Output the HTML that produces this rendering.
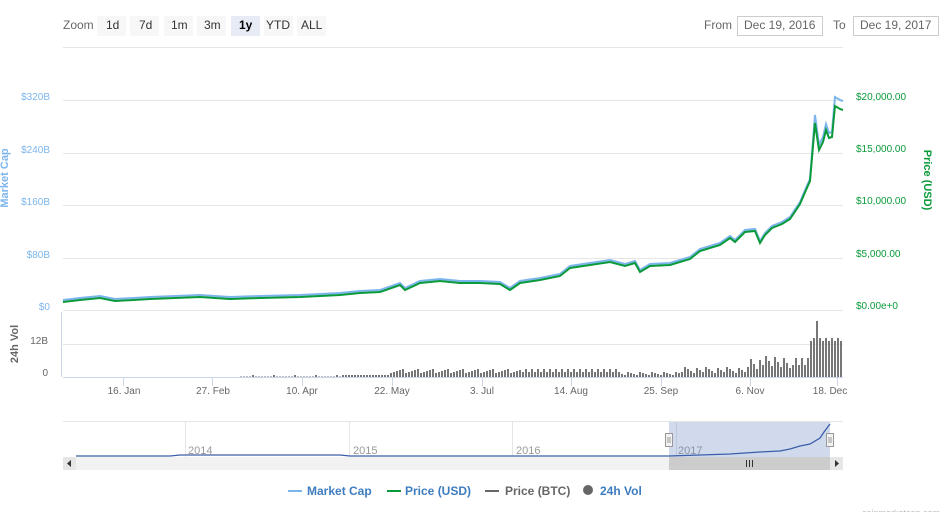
<!DOCTYPE html>
<html><head><meta charset="utf-8"><style>
body{margin:0;background:#fff;width:944px;height:512px;overflow:hidden;font-family:"Liberation Sans","DejaVu Sans",sans-serif}
svg text{font-family:"Liberation Sans","DejaVu Sans",sans-serif}
</style></head><body>
<svg id="s" width="944" height="512" viewBox="0 0 944 512" xmlns="http://www.w3.org/2000/svg">
<g font-size="12" fill="#666">
<text x="63" y="29">Zoom</text>
<rect x="97" y="16" width="29" height="20" fill="#f7f7f7"/><text x="106" y="29" fill="#333">1d</text>
<rect x="130" y="16" width="29" height="20" fill="#f7f7f7"/><text x="139" y="29" fill="#333">7d</text>
<rect x="164" y="16" width="29" height="20" fill="#f7f7f7"/><text x="171" y="29" fill="#333">1m</text>
<rect x="197" y="16" width="29" height="20" fill="#f7f7f7"/><text x="204" y="29" fill="#333">3m</text>
<rect x="231" y="16" width="29" height="20" fill="#e6ebf5"/><text x="239" y="29" fill="#000" font-weight="bold">1y</text>
<rect x="264" y="16" width="29" height="20" fill="#f7f7f7"/><text x="266" y="29" fill="#333">YTD</text>
<rect x="297" y="16" width="29" height="20" fill="#f7f7f7"/><text x="301" y="29" fill="#333">ALL</text>
<text x="704" y="29">From</text>
<rect x="737.5" y="16.5" width="85" height="19" fill="#fff" stroke="#ccc"/><text x="744" y="29">Dec 19, 2016</text>
<text x="833" y="29">To</text>
<rect x="853.5" y="16.5" width="85" height="19" fill="#fff" stroke="#ccc"/><text x="860" y="29">Dec 19, 2017</text>
</g>
<g stroke="#e6e6e6" stroke-width="1">
<line x1="63" x2="843" y1="47.5" y2="47.5"/>
<line x1="63" x2="843" y1="100.5" y2="100.5"/>
<line x1="63" x2="843" y1="153.5" y2="153.5"/>
<line x1="63" x2="843" y1="205.5" y2="205.5"/>
<line x1="63" x2="843" y1="258.5" y2="258.5"/>
<line x1="63" x2="843" y1="310.5" y2="310.5"/>
<line x1="63" x2="843" y1="344.5" y2="344.5"/>
<line x1="63" x2="843" y1="421.5" y2="421.5"/>
</g>
<line x1="61.5" x2="61.5" y1="312" y2="377" stroke="#ccd6eb"/>
<line x1="63" x2="843" y1="377.5" y2="377.5" stroke="#ccd6eb"/>
<g font-size="10" fill="#7cb5ec" text-anchor="end">
<text x="50" y="100">$320B</text><text x="50" y="153">$240B</text><text x="50" y="205">$160B</text><text x="50" y="258">$80B</text><text x="50" y="310">$0</text>
</g>
<text transform="translate(8,178) rotate(-90)" font-size="11" font-weight="bold" fill="#7cb5ec" text-anchor="middle">Market Cap</text>
<g font-size="10" fill="#0a9a3a">
<text x="856" y="100">$20,000.00</text><text x="856" y="152">$15,000.00</text><text x="856" y="204">$10,000.00</text><text x="856" y="257">$5,000.00</text><text x="856" y="309">$0.00e+0</text>
</g>
<text transform="translate(924,180) rotate(90)" font-size="11" font-weight="bold" fill="#0a9a3a" text-anchor="middle">Price (USD)</text>
<g font-size="10" fill="#666" text-anchor="end"><text x="48" y="344">12B</text><text x="48" y="376">0</text></g>
<text transform="translate(18,344) rotate(-90)" font-size="11" font-weight="bold" fill="#666" text-anchor="middle">24h Vol</text>
<g id="vol" fill="#777"></g>
<g stroke="#ccd6eb"><line x1="123.5" x2="123.5" y1="378" y2="386"/><line x1="212.5" x2="212.5" y1="378" y2="386"/><line x1="302.5" x2="302.5" y1="378" y2="386"/><line x1="392.5" x2="392.5" y1="378" y2="386"/><line x1="482.5" x2="482.5" y1="378" y2="386"/><line x1="571.5" x2="571.5" y1="378" y2="386"/><line x1="661.5" x2="661.5" y1="378" y2="386"/><line x1="750.5" x2="750.5" y1="378" y2="386"/><line x1="837.5" x2="837.5" y1="378" y2="386"/></g>
<g font-size="10" fill="#666" text-anchor="middle">
<text x="124" y="394">16. Jan</text><text x="213" y="394">27. Feb</text><text x="302" y="394">10. Apr</text><text x="392" y="394">22. May</text><text x="482" y="394">3. Jul</text><text x="571" y="394">14. Aug</text><text x="661" y="394">25. Sep</text><text x="750" y="394">6. Nov</text><text x="830" y="394">18. Dec</text>
</g>
<polyline fill="none" stroke="#7cb5ec" stroke-width="2" points="63,300 80,298 100,296 115,299 150,297 200,295 230,297 260,296 300,295 340,293 360,291 380,290 400,283 405,288 420,281 440,279 460,281 480,281 500,282 510,288 520,281 540,278 560,274 570,266 590,263 610,260 625,264 635,261 640,270 650,264 670,263 690,257 700,249 720,243 730,236 735,240 745,230 755,229 760,241 765,233 772,226 782,222 790,217 800,202 806,188 810,179 815,115 819,145 823,137 826,124 829,133 832,132 835,97 840,100 843,101"/>
<polyline fill="none" stroke="#0a9a3a" stroke-width="2" points="63,302 80,300 100,298 115,301 150,299 200,297 230,299 260,298 300,297 340,295 360,293 380,292 400,285 405,290 420,283 440,281 460,283 480,283 500,284 510,290 520,283 540,280 560,276 570,268 590,265 610,262 625,266 635,263 640,272 650,266 670,265 690,259 700,251 720,245 730,238 735,242 745,232 755,231 760,243 765,235 772,228 782,224 790,219 800,204 806,190 810,181 815,123 819,150 823,142 826,130 829,138 832,137 835,106 840,109 843,110"/>
<!-- navigator -->
<g stroke="#e6e6e6"><line x1="185.5" x2="185.5" y1="422" y2="457"/><line x1="349.5" x2="349.5" y1="422" y2="457"/><line x1="512.5" x2="512.5" y1="422" y2="457"/><line x1="676.5" x2="676.5" y1="422" y2="457"/></g>
<g font-size="11" fill="#999"><text x="188" y="454">2014</text><text x="353" y="454">2015</text><text x="516" y="454">2016</text><text x="678" y="454">2017</text></g>
<rect x="669" y="422" width="161" height="35" fill="rgba(102,133,194,0.3)"/>
<polyline fill="none" stroke="#3a5fa8" stroke-width="1.3" points="76,456 170,456 180,455 340,455 350,456 669,456 700,455 730,454 760,452 780,451 790,449 800,446 810,444 820,438 824,432 827,428 830,424"/>
<rect x="665.5" y="433.5" width="7" height="13" fill="#f2f2f2" stroke="#999"/><line x1="668" x2="668" y1="437" y2="443" stroke="#999"/><line x1="670" x2="670" y1="437" y2="443" stroke="#999"/>
<rect x="826.5" y="433.5" width="7" height="13" fill="#f2f2f2" stroke="#999"/><line x1="829" x2="829" y1="437" y2="443" stroke="#999"/><line x1="831" x2="831" y1="437" y2="443" stroke="#999"/>
<rect x="63" y="457" width="780" height="13" fill="#f2f2f2"/>
<rect x="669" y="457" width="161" height="13" fill="#ccc"/>
<rect x="63" y="457" width="13" height="13" fill="#e6e6e6"/><path d="M71,460 L67,463.5 L71,467Z" fill="#333"/>
<rect x="830" y="457" width="13" height="13" fill="#e6e6e6"/><path d="M835,460 L839,463.5 L835,467Z" fill="#333"/>
<g stroke="#333"><line x1="746.5" x2="746.5" y1="460" y2="467"/><line x1="749.5" x2="749.5" y1="460" y2="467"/><line x1="752.5" x2="752.5" y1="460" y2="467"/></g>
<!-- legend -->
<g font-size="12" font-weight="bold">
<line x1="288" x2="302" y1="491" y2="491" stroke="#7cb5ec" stroke-width="2"/><text x="307" y="495" fill="#3e7cc0">Market Cap</text>
<line x1="387" x2="401" y1="491" y2="491" stroke="#0a9a3a" stroke-width="2"/><text x="405" y="495" fill="#3e7cc0">Price (USD)</text>
<line x1="485" x2="499" y1="491" y2="491" stroke="#666" stroke-width="2"/><text x="505" y="495" fill="#666">Price (BTC)</text>
<circle cx="588" cy="490" r="5" fill="#666"/><text x="600" y="495" fill="#3e7cc0">24h Vol</text>
</g>
<text x="940" y="516" font-size="9" fill="#bbb" text-anchor="end">coinmarketcap.com</text>
</svg>
<script>
var g=document.getElementById('vol'),h='';
function hv(x){var t=(x-63)/780;var b;
if(x<240)b=0;else if(x<340)b=(x%7==0)?2:0.5;else if(x<390)b=2+(x%3);else if(x<520)b=4+((x*7)%5);else if(x<620)b=5+((x*13)%6);else if(x<680)b=2+((x*5)%4);else if(x<750)b=4+((x*11)%7);else if(x<790)b=8+((x*17)%14);else if(x<810)b=12+((x*7)%14)+(x==797?18:0);else b=36+((x*3)%6)+(x==816?20:0);
if(x==724)b=14;if(x==763)b=22;return b;}
for(var x=240;x<843;x+=3){var v=hv(x);if(v>0)h+='<rect x="'+x+'" y="'+(377-v)+'" width="2" height="'+v+'"/>';}
g.innerHTML=h;
</script>
</body></html>
